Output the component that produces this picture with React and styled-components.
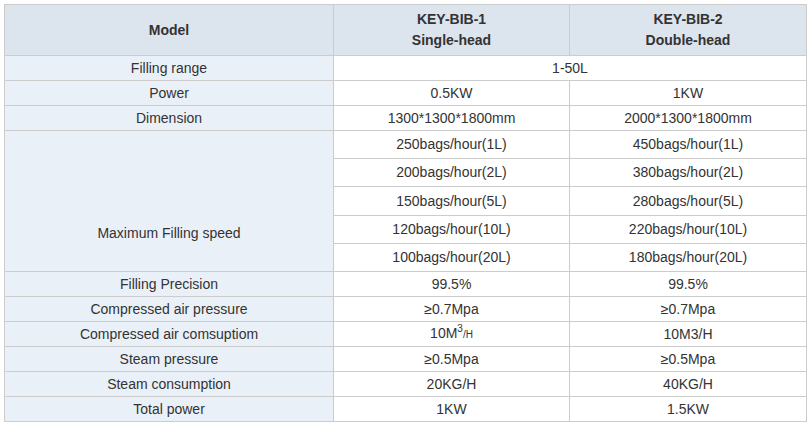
import styled, { createGlobalStyle } from 'styled-components';

const GlobalStyle = createGlobalStyle`
    body {
        margin: 4px;
        background: #fff;
        font-family: "Liberation Sans", Arial, sans-serif;
    }
`

const SpecTable = styled.table`
    border-collapse: collapse;
    width: 803px;
    table-layout: fixed;
    color: #333;
    font-size: 14px;
    td, th {
        border: 1px solid #cccccc;
        padding: 0;
        text-align: center;
        vertical-align: middle;
        line-height: 21px;
    }
`

const HeadCell = styled.th`
    background: #dce4ee;
    font-weight: bold;
    height: 50px;
`

const LabelCell = styled.td`
    background: #eaf0f7;
    height: ${p => p.$h || 24}px;
    padding-top: ${p => p.$pushed ? '64px' : '0'} !important;
`

const ValueCell = styled.td`
    background: #fff;
    height: ${p => p.$h || 24}px;
`

const Small = styled.span`
    font-size: 10px;
`

const Sup = styled.sup`
    font-size: 10px;
    line-height: 0;
`

const speeds = [
    ['250bags/hour(1L)', '450bags/hour(1L)', 27],
    ['200bags/hour(2L)', '380bags/hour(2L)', 27],
    ['150bags/hour(5L)', '280bags/hour(5L)', 28],
    ['120bags/hour(10L)', '220bags/hour(10L)', 27],
    ['100bags/hour(20L)', '180bags/hour(20L)', 27],
]

const rows = [
    ['Filling Precision', '99.5%', '99.5%'],
    ['Compressed air pressure', '≥0.7Mpa', '≥0.7Mpa'],
    ['Compressed air comsuptiom', <>10M<Sup>3</Sup><Small>/H</Small></>, '10M3/H'],
    ['Steam pressure', '≥0.5Mpa', '≥0.5Mpa'],
    ['Steam consumption', '20KG/H', '40KG/H'],
    ['Total power', '1KW', '1.5KW'],
]

export default function App() {
    return (
        <>
            <GlobalStyle />
            <SpecTable>
                <colgroup>
                    <col style={{ width: 329 }} />
                    <col style={{ width: 236 }} />
                    <col style={{ width: 237 }} />
                </colgroup>
                <thead>
                    <tr>
                        <HeadCell>Model</HeadCell>
                        <HeadCell>KEY-BIB-1<br />Single-head</HeadCell>
                        <HeadCell>KEY-BIB-2<br />Double-head</HeadCell>
                    </tr>
                </thead>
                <tbody>
                    <tr>
                        <LabelCell>Filling range</LabelCell>
                        <ValueCell colSpan={2}>1-50L</ValueCell>
                    </tr>
                    <tr>
                        <LabelCell>Power</LabelCell>
                        <ValueCell>0.5KW</ValueCell>
                        <ValueCell>1KW</ValueCell>
                    </tr>
                    <tr>
                        <LabelCell>Dimension</LabelCell>
                        <ValueCell>1300*1300*1800mm</ValueCell>
                        <ValueCell>2000*1300*1800mm</ValueCell>
                    </tr>
                    {speeds.map(([a, b, h], i) => (
                        <tr key={a}>
                            {i === 0 && <LabelCell rowSpan={5} $pushed>Maximum Filling speed</LabelCell>}
                            <ValueCell $h={h}>{a}</ValueCell>
                            <ValueCell $h={h}>{b}</ValueCell>
                        </tr>
                    ))}
                    {rows.map(([label, a, b]) => (
                        <tr key={label}>
                            <LabelCell>{label}</LabelCell>
                            <ValueCell>{a}</ValueCell>
                            <ValueCell>{b}</ValueCell>
                        </tr>
                    ))}
                </tbody>
            </SpecTable>
        </>
    );
}
